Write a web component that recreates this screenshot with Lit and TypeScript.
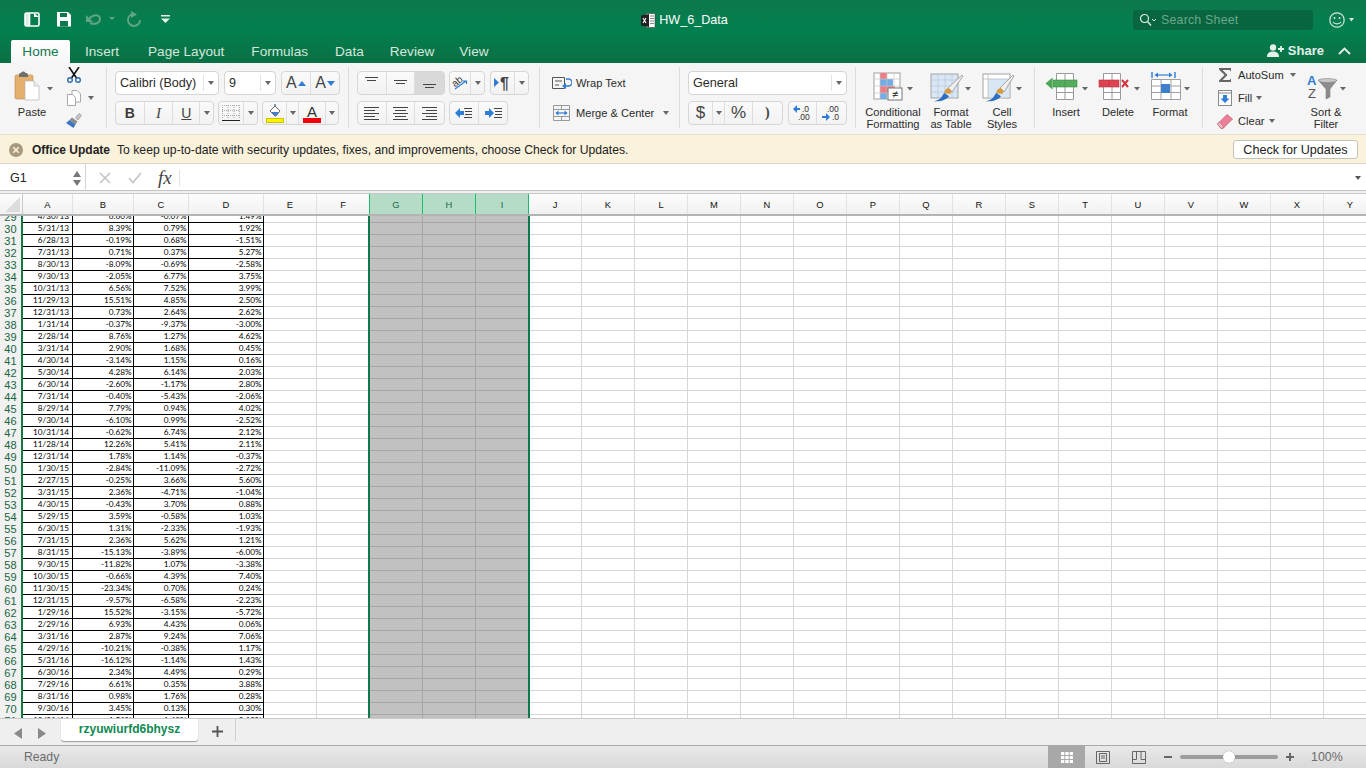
import { LitElement, html, css } from "lit";
import { customElement } from "lit/decorators.js";

// [date, B, C, D] for rows 29-71
const DATA: string[][] = [
  ["4/30/13", "6.60", "-0.07", "1.49"],
  ["5/31/13", "8.39", "0.79", "1.92"],
  ["6/28/13", "-0.19", "0.68", "-1.51"],
  ["7/31/13", "0.71", "0.37", "5.27"],
  ["8/30/13", "-8.09", "-0.69", "-2.58"],
  ["9/30/13", "-2.05", "6.77", "3.75"],
  ["10/31/13", "6.56", "7.52", "3.99"],
  ["11/29/13", "15.51", "4.85", "2.50"],
  ["12/31/13", "0.73", "2.64", "2.62"],
  ["1/31/14", "-0.37", "-9.37", "-3.00"],
  ["2/28/14", "8.76", "1.27", "4.62"],
  ["3/31/14", "2.90", "1.68", "0.45"],
  ["4/30/14", "-3.14", "1.15", "0.16"],
  ["5/30/14", "4.28", "6.14", "2.03"],
  ["6/30/14", "-2.60", "-1.17", "2.80"],
  ["7/31/14", "-0.40", "-5.43", "-2.06"],
  ["8/29/14", "7.79", "0.94", "4.02"],
  ["9/30/14", "-6.10", "0.99", "-2.52"],
  ["10/31/14", "-0.62", "6.74", "2.12"],
  ["11/28/14", "12.26", "5.41", "2.11"],
  ["12/31/14", "1.78", "1.14", "-0.37"],
  ["1/30/15", "-2.84", "-11.09", "-2.72"],
  ["2/27/15", "-0.25", "3.66", "5.60"],
  ["3/31/15", "2.36", "-4.71", "-1.04"],
  ["4/30/15", "-0.43", "3.70", "0.88"],
  ["5/29/15", "3.59", "-0.58", "1.03"],
  ["6/30/15", "1.31", "-2.33", "-1.93"],
  ["7/31/15", "2.36", "5.62", "1.21"],
  ["8/31/15", "-15.13", "-3.89", "-6.00"],
  ["9/30/15", "-11.82", "1.07", "-3.38"],
  ["10/30/15", "-0.66", "4.39", "7.40"],
  ["11/30/15", "-23.34", "0.70", "0.24"],
  ["12/31/15", "-9.57", "-6.58", "-2.23"],
  ["1/29/16", "15.52", "-3.15", "-5.72"],
  ["2/29/16", "6.93", "4.43", "0.06"],
  ["3/31/16", "2.87", "9.24", "7.06"],
  ["4/29/16", "-10.21", "-0.38", "1.17"],
  ["5/31/16", "-16.12", "-1.14", "1.43"],
  ["6/30/16", "2.34", "4.49", "0.29"],
  ["7/29/16", "6.61", "0.35", "3.88"],
  ["8/31/16", "0.98", "1.76", "0.28"],
  ["9/30/16", "3.45", "0.13", "0.30"],
  ["10/31/16", "1.51", "-1.48", "3.19"],
];

const COLS = "ABCDEFGHIJKLMNOPQRSTUVWXY".split("");
const SELECTED = ["G", "H", "I"];

const caret = html`<span class="caret"></span>`;

@customElement("app-root")
export class AppRoot extends LitElement {
  static styles = css`
    :host {
      display: flex;
      flex-direction: column;
      width: 1366px;
      height: 768px;
      overflow: hidden;
      background: #fff;
      font-family: "Liberation Sans", Arial, sans-serif;
      color: #222;
    }
    svg { display: block; flex: none; }

    /* title bar */
    .top {
      height: 63px;
      flex: none;
      background: linear-gradient(#0e784d, #03804f 45%, #0a6f45);
      display: flex;
      flex-direction: column;
    }
    .title-row {
      height: 40px;
      display: grid;
      grid-template-columns: 1fr auto 1fr;
      align-items: center;
    }
    .qat { display: flex; align-items: center; padding-left: 24px; }
    .doc {
      display: flex;
      align-items: center;
      gap: 3px;
      padding-left: 3px;
      color: #fff;
      font-size: 12.6px;
    }
    .tr { display: flex; justify-content: flex-end; align-items: center; padding-right: 11px; }
    .search {
      width: 180px;
      height: 20px;
      box-sizing: border-box;
      background: #07653f;
      border-radius: 3px;
      display: flex;
      align-items: center;
      padding-left: 6px;
      gap: 4px;
      color: #6aa88b;
      font-size: 12.4px;
      letter-spacing: 0.2px;
      margin-right: 16px;
    }
    .tab-row {
      height: 23px;
      display: flex;
      align-items: flex-end;
      padding-left: 11px;
      font-size: 13.6px;
      color: #d3e7dc;
    }
    .tab { height: 23px; line-height: 24px; margin-right: 27px; }
    .tab.home {
      width: 59px;
      text-align: center;
      background: linear-gradient(#fff, #f6f6f6);
      color: #14774b;
      border-radius: 2px 2px 0 0;
      margin-right: 15px;
    }
    .tab.ins { margin-right: 29px; }
    .tab.dat { margin-right: 26px; }
    .tab.rev { margin-right: 25px; }
    .share {
      margin-left: auto;
      display: flex;
      align-items: center;
      height: 23px;
      color: #e4f0ea;
      font-weight: 700;
      font-size: 13px;
      padding: 0 15px 2px 0;
      box-sizing: border-box;
      gap: 3px;
    }
    .share .chev { margin-left: 11px; }

    /* ribbon */
    .ribbon {
      height: 71px;
      flex: none;
      box-sizing: border-box;
      background: #f5f5f5;
      display: flex;
      padding-top: 4px;
      font-size: 11.1px;
      color: #2b2b2b;
    }
    .g {
      height: 61px;
      box-sizing: border-box;
      border-right: 1px solid #dcdcdc;
      display: flex;
      flex: none;
    }
    .g.clip { width: 107px; padding-left: 8px; }
    .g.font { width: 242px; padding: 4px 0 0 8px; flex-direction: column; gap: 6px; }
    .g.align { width: 191px; padding: 4px 0 0 8px; flex-direction: column; gap: 6px; }
    .g.wrap { width: 140px; padding: 4px 0 0 12px; flex-direction: column; gap: 6px; }
    .g.num { width: 176px; padding: 4px 0 0 8px; flex-direction: column; gap: 6px; }
    .g.styles { width: 179px; padding-left: 8px; }
    .g.cells { width: 168px; padding-left: 5px; }
    .g.edit { width: 163px; padding-left: 14px; border-right: 0; }

    .line { display: flex; height: 24px; align-items: stretch; }
    .big { display: flex; flex-direction: column; align-items: center; text-align: center; line-height: 12px; flex: none; }
    .big svg { height: 37px; margin-bottom: 2px; }
    .w48 { width: 48px; }
    .w58 { width: 58px; }
    .w44 { width: 44px; }
    .w52 { width: 52px; }
    .small-col { display: flex; flex-direction: column; gap: 7px; flex: none; }
    .small-col.tools { margin-left: 10px; width: 40px; }
    .small-col.sum { width: 87px; }
    .si { display: flex; align-items: center; height: 16px; gap: 5px; }
    .si .caret { margin-left: -1px; }
    .si .caret.gapc { margin-left: 1px; }
    .tools .si .caret { margin-left: 1px; }

    .caret {
      display: inline-block;
      width: 0;
      height: 0;
      border-left: 3px solid transparent;
      border-right: 3px solid transparent;
      border-top: 4px solid #666;
      flex: none;
    }
    .select {
      background: #fff;
      border: 1px solid #d4d4d4;
      border-radius: 4px;
      box-sizing: border-box;
      display: flex;
      align-items: center;
      font-size: 12.6px;
      padding-left: 4px;
    }
    .select .arrow {
      margin-left: auto;
      height: 16px;
      width: 13px;
      border-left: 1px solid #e2e2e2;
      display: flex;
      align-items: center;
      justify-content: center;
      flex: none;
      margin-right: 1px;
    }
    .s-font { width: 104px; }
    .s-size { width: 52px; margin-left: 5px; }
    .s-gen { width: 159px; }
    .bg {
      display: flex;
      background: linear-gradient(#fafafa, #f2f2f2);
      border: 1px solid #d6d6d6;
      border-radius: 4px;
      box-sizing: border-box;
    }
    .b {
      display: flex;
      align-items: center;
      justify-content: center;
      box-sizing: border-box;
      border-right: 1px solid #dedede;
      color: #444;
      flex: none;
    }
    .b:last-child { border-right: 0; }
    .b.on { background: #d9d9d9; }
    .bg.ml5 { margin-left: 5px; }
    .bg.ml4 { margin-left: 4px; }
    .w29 { width: 28.7px; }
    .w12 { width: 12px; }
    .w13 { width: 13px; }
    .w21 { width: 21px; }
    .w24 { width: 24px; }
    .w25 { width: 25px; }
    .w27 { width: 27px; }
    .w28 { width: 28px; }
    .gp { font-size: 16px; gap: 1px; font-weight: 400; }
    .bold { font-weight: 700; font-size: 14px; color: #3c3c3c; }
    .ital { font-style: italic; font-family: "Liberation Serif", serif; font-size: 15px; }
    .und { text-decoration: underline; font-size: 14px; }
    .sym { font-size: 17px; color: #444; }
    .comma { font-family: "Liberation Serif", serif; font-weight: 700; font-size: 14px; }
    .wl { display: flex; align-items: center; height: 24px; gap: 4px; }
    .wl .caret { margin-left: 5px; }
    svg text { font-family: "Liberation Sans", Arial, sans-serif; }

    /* update bar */
    .update {
      height: 30px;
      flex: none;
      box-sizing: border-box;
      background: #fbf2dc;
      border-top: 1px solid #e6e0cf;
      border-bottom: 1px solid #d8d4c8;
      display: flex;
      align-items: center;
      padding: 1px 0 0 9px;
      font-size: 12.2px;
      color: #222;
    }
    .update b { font-weight: 700; margin: 0 7px 0 9px; font-size: 12px; }
    .update button {
      margin-left: auto;
      margin-right: 8px;
      width: 125px;
      height: 19px;
      padding: 0;
      background: #fff;
      border: 1px solid #c4c2bb;
      border-radius: 3px;
      font: 12.6px "Liberation Sans", Arial, sans-serif;
      color: #222;
    }

    /* formula bar */
    .fx {
      height: 27px;
      flex: none;
      box-sizing: border-box;
      background: #fff;
      border-bottom: 1px solid #c2c2c2;
      display: flex;
      align-items: center;
    }
    .name {
      width: 86px;
      height: 100%;
      box-sizing: border-box;
      border-right: 1px solid #d4d4d4;
      display: flex;
      align-items: center;
      padding: 2px 0 0 10px;
      font-size: 12.6px;
      flex: none;
    }
    .name svg { margin-left: auto; margin-right: 4px; }
    .fx-tools { display: flex; align-items: center; padding: 2px 0 0 13px; flex: 1; height: 100%; box-sizing: border-box; }
    .fx-tools .chk { margin-left: 17px; }
    .fxt {
      font-family: "Liberation Serif", serif;
      font-style: italic;
      font-size: 19px;
      color: #444;
      margin-left: 16px;
      padding-right: 7px;
      border-right: 1px solid #e0e0e0;
      line-height: 16px;
    }
    .fx-tools .caret { margin-left: auto; margin-right: 5px; border-top-color: #555; }
    .fx-gap { height: 3px; flex: none; background: #f0f0f0; border-bottom: 1px solid #c8c8c8; box-sizing: border-box; }

    /* grid */
    .cols, .row { display: grid; grid-template-columns: 23px 50px 61px 55px 75px 53px 53px repeat(19, 53px); }
    .cols {
      height: 22px;
      flex: none;
      box-sizing: border-box;
      border-bottom: 2px solid #b4b4b4;
      background: linear-gradient(#fdfdfd, #f1f1f1);
      font-size: 9.4px;
      color: #111;
    }
    .corner { position: relative; border-right: 1px solid #c8c8c8; }
    .corner::after {
      content: "";
      position: absolute;
      right: 2px;
      bottom: 2px;
      border-left: 15px solid transparent;
      border-bottom: 15px solid #dcdcdc;
    }
    .ch {
      display: flex;
      align-items: center;
      justify-content: center;
      box-sizing: border-box;
      border-right: 1px solid #e2e2e2;
    }
    .ch.sel { background: #b4dcc6; color: #1c6a48; border-right: 1px solid #1ebd6e; }
    .ch.pre { border-right: 1px solid #1ebd6e; }
    .sheet { height: 502px; flex: none; overflow: hidden; position: relative; background: #fff; }
    .rows { margin-top: -5px; }
    .row { height: 12px; font-family: Lato, Carlito, sans-serif; font-size: 8.2px; line-height: 11px; color: #000; }
    .rh {
      background: #f1f1f1;
      border-right: 2px solid #107c41;
      box-sizing: border-box;
      font: 11px/12px "Liberation Sans", Arial, sans-serif;
      color: #17663f;
      text-align: center;
      letter-spacing: 0.2px;
    }
    .c {
      box-sizing: border-box;
      border-right: 1px solid #d6d6d6;
      border-bottom: 1px solid #d6d6d6;
      text-align: right;
      padding-right: 1.5px;
      white-space: nowrap;
      overflow: hidden;
    }
    .c.data { border-color: #000; }
    .c.date { padding-right: 3px; }
    .c.sel { background: #c1c1c1; border-color: #a6a6a6; }
    .selbar { position: absolute; top: 0; bottom: 0; width: 2px; background: #0a7a4a; }
    .selbar.l { left: 368px; }
    .selbar.r { left: 528px; }

    /* sheet tabs */
    .tabs {
      height: 27px;
      flex: none;
      box-sizing: border-box;
      background: #efefef;
      border-top: 1px solid #c9c9c9;
      display: flex;
      padding-left: 14px;
    }
    .nav { display: flex; gap: 16px; align-items: center; width: 47px; padding-top: 2px; }
    .stab {
      width: 137px;
      height: 22px;
      background: #fff;
      border-radius: 0 0 3px 3px;
      box-shadow: 0 1px 1px #9a9a9a;
      color: #0f8a52;
      font-weight: 700;
      font-size: 12px;
      line-height: 21px;
      text-align: center;
    }
    .plus {
      width: 38px;
      height: 22px;
      box-sizing: border-box;
      border-right: 1px solid #cfcfcf;
      display: flex;
      align-items: center;
      justify-content: center;
      padding: 2px 0 0 2px;
    }

    /* status bar */
    .status {
      height: 23px;
      flex: none;
      box-sizing: border-box;
      background: linear-gradient(#e9e9e9, #d9d9d9);
      border-top: 1px solid #a9a9a9;
      display: flex;
      align-items: center;
      padding-left: 24px;
      font-size: 12.2px;
      color: #6c6c6c;
    }
    .views { margin-left: auto; display: flex; align-items: stretch; height: 100%; }
    .view { width: 36px; display: flex; align-items: center; justify-content: center; }
    .view.on { background: #a8a8a8; width: 37px; }
    .view.last { width: 35px; }
    .zoom { display: flex; align-items: center; margin-left: 8px; }
    .track {
      width: 98px;
      height: 4px;
      background: #9c9c9c;
      border-radius: 2px;
      margin: 0 8px;
      position: relative;
    }
    .knob {
      position: absolute;
      left: 43px;
      top: -4px;
      width: 12px;
      height: 12px;
      background: #fff;
      border-radius: 50%;
      box-shadow: 0 0 1px #777;
    }
    .pct {
      width: 72px;
      padding-left: 17px;
      box-sizing: border-box;
      font-size: 12.4px;
      display: flex;
      align-items: center;
    }
  `;

  // quick access toolbar
  private qat() {
    return html`<div class="qat">
      <svg width="150" height="40" viewBox="0 0 150 40">
        <g fill="none" stroke="#fff" stroke-width="1.6">
          <rect x="1" y="13" width="14" height="13" rx="1.5" />
          <path d="M5.5 13v13" />
        </g>
        <path d="M1 13h5v13H1z" fill="#fff" opacity=".85" />
        <path d="M10 13l5 4h-5z" fill="#fff" />
        <path d="M33 12h11l3 3v11.5H33z" fill="#fff" />
        <path d="M36 13h7v4h-7z" fill="#0a7a4d" />
        <path d="M36 21h8v5.5h-8z" fill="#0a7a4d" />
        <g fill="none" stroke="#5fa585" stroke-width="2">
          <path d="M66 23c5 2 10 0 10-4s-5-5-9-2l-3 3" />
          <path d="M110 14c-4 0-6 3-6 6a6 6 0 0 0 12 0" />
        </g>
        <path d="M62 15v7h7z" fill="#5fa585" />
        <path d="M85 17h6l-3 3z" fill="#5fa585" />
        <path d="M107 11v7l6-3.500z" fill="#5fa585" />
        <path d="M137 15h9v1.600h-9zM137 18.500h9l-4.500 4.500z" fill="#e8f2ed" />
      </svg>
    </div>`;
  }

  private excelDoc() {
    return html`<svg width="15" height="15" viewBox="0 0 15 15">
      <path d="M5 .5h9v14H5z" fill="#fff" stroke="#444" stroke-width=".6" />
      <path d="M9 3h4M9 5.500h4M9 8h4M9 10.500h4" stroke="#777" stroke-width=".9" />
      <path d="M0 2.500l8-1.500v13l-8-1.500z" fill="#222" />
      <path d="M2 5l3 5M5 5l-3 5" stroke="#fff" stroke-width="1.100" />
    </svg>`;
  }

  private pasteIcon() {
    return html`<svg width="48" height="37" viewBox="0 0 48 37">
      <rect x="7" y="8" width="18" height="24" rx="1.500" fill="#e4b06e" stroke="#b98a4e" stroke-width=".6" />
      <path d="M11 8c0-2 1.500-2 2-2 .5-2 4-2 4.500 0 .8 0 2.500 0 2.500 2v2h-9z" fill="#6f6f6f" />
      <path d="M17 14h9l5 5v14H17z" fill="#fff" stroke="#b5b5b5" stroke-width=".7" />
      <path d="M26 14v5h5" fill="#eee" stroke="#b5b5b5" stroke-width=".7" />
      <path d="M39 20h6l-3 3.500z" fill="#666" />
    </svg>`;
  }

  private scissors() {
    return html`<svg width="16" height="16" viewBox="0 0 16 16">
      <path d="M3 0l7.500 11M13 0L5.500 11" stroke="#111" stroke-width="1.600" fill="none" />
      <circle cx="4" cy="13" r="2.300" fill="none" stroke="#2b6db0" stroke-width="1.400" />
      <circle cx="12" cy="13" r="2.300" fill="none" stroke="#2b6db0" stroke-width="1.400" />
    </svg>`;
  }

  private copyIcon() {
    return html`<svg width="16" height="16" viewBox="0 0 16 16">
      <path d="M1.500 4.500h5l3 3v8h-8z" fill="#fff" stroke="#a8a8a8" />
      <path d="M6 .5h5l3.500 3.500v8H9.500V7.500l-3-3H6z" fill="#fff" stroke="#a8a8a8" />
    </svg>`;
  }

  private brushIcon() {
    return html`<svg width="16" height="16" viewBox="0 0 16 16">
      <path d="M9.500 5l3.500-4.500 2.500 2L12 7z" fill="#c6c6c6" stroke="#8a8a8a" stroke-width=".6" />
      <path d="M6 4.500l5.500 4-2 3-6-4.500z" fill="#8b8b8b" />
      <path d="M3.500 7l6 4.500-2 3.500L0 10z" fill="#3a78c0" />
    </svg>`;
  }

  private alignV(y: number, on = false) {
    return html`<div class="b w29 ${on ? "on" : ""}">
      <svg width="15" height="14" viewBox="0 0 15 14">
        <path d="M1 ${y}.5h13M3 ${y + 3}.5h9" stroke="#444" stroke-width="1" />
      </svg>
    </div>`;
  }

  private alignH(kind: string) {
    const second =
      kind === "l"
        ? "M0 3.500h11M0 9.500h11"
        : kind === "c"
        ? "M2 3.500h11M2 9.500h11"
        : "M4 3.500h11M4 9.500h11";
    return html`<div class="b w29">
      <svg width="15" height="13" viewBox="0 0 15 13">
        <path d="M0 .5h15M0 6.500h15M0 12.500h15 ${second}" stroke="#444" stroke-width="1" />
      </svg>
    </div>`;
  }

  private indent(right: boolean) {
    const arrow = right ? "M0 4h4V1l5 5-5 5V8H0z" : "M9 4H5V1L0 6l5 5V8h4z";
    return html`<div class="b w29">
      <svg width="17" height="12" viewBox="0 0 17 12">
        <path d=${arrow} fill="#2f7dd6" />
        <path d="M9 1.500h8M10 4.500h7M10 7.500h7M9 10.500h8" stroke="#444" stroke-width="1" />
      </svg>
    </div>`;
  }

  private ribbon() {
    return html`<div class="ribbon">
      <div class="g clip">
        <div class="big w48">${this.pasteIcon()}<span>Paste</span></div>
        <div class="small-col tools">
          <div class="si">${this.scissors()}</div>
          <div class="si">${this.copyIcon()}${caret}</div>
          <div class="si">${this.brushIcon()}</div>
        </div>
      </div>

      <div class="g font">
        <div class="line">
          <div class="select s-font">Calibri (Body)<span class="arrow">${caret}</span></div>
          <div class="select s-size">9<span class="arrow">${caret}</span></div>
          <div class="bg ml5">
            <div class="b w29 gp">A<svg width="8" height="5"><path d="M0 5h8L4 0z" fill="#2f7dd6" /></svg></div>
            <div class="b w29 gp">A<svg width="8" height="5"><path d="M0 0h8L4 5z" fill="#2f7dd6" /></svg></div>
          </div>
        </div>
        <div class="line">
          <div class="bg">
            <div class="b w29 bold">B</div>
            <div class="b w29 ital">I</div>
            <div class="b w27 und">U</div>
            <div class="b w13">${caret}</div>
          </div>
          <div class="bg ml4">
            <div class="b w25">
              <svg width="18" height="18" viewBox="0 0 18 18">
                <path d="M.5 1v14M6 1v14M12 1v14M17.500 1v14M0 1.500h18M0 6.500h18M0 11.500h18" stroke="#aaa" stroke-width="1" stroke-dasharray="1 1" />
                <path d="M0 16.500h18" stroke="#222" stroke-width="1" />
              </svg>
            </div>
            <div class="b w13">${caret}</div>
          </div>
          <div class="bg ml4">
            <div class="b w24">
              <svg width="20" height="20" viewBox="0 0 20 20">
                <path d="M5 8l5-5 5 5-4 5-1 0z" fill="#fff" stroke="#555" stroke-width=".9" />
                <path d="M6 9h8l-3.500 4z" fill="#3a7fce" />
                <path d="M10 3V1" stroke="#3a7fce" stroke-width="1.500" />
                <rect x="1.500" y="15.500" width="17" height="4" fill="#fff200" stroke="#c9c400" />
              </svg>
            </div>
            <div class="b w12">${caret}</div>
            <div class="b w27">
              <svg width="20" height="20" viewBox="0 0 20 20">
                <text x="10" y="14" font-size="15" text-anchor="middle" fill="#333">A</text>
                <rect x="1" y="15" width="18" height="5" fill="#f0000a" />
              </svg>
            </div>
            <div class="b w12">${caret}</div>
          </div>
        </div>
      </div>

      <div class="g align">
        <div class="line">
          <div class="bg">${this.alignV(1)}${this.alignV(4)}${this.alignV(8, true)}</div>
          <div class="bg ml4">
            <div class="b w21">
              <svg width="20" height="18" viewBox="0 0 20 18">
                <text x="2" y="11" font-size="10" fill="#333" transform="rotate(-40 7 8)">ab</text>
                <path d="M5 15l11-8M13 7h3.500v3" fill="none" stroke="#2f7dd6" stroke-width="1.200" />
              </svg>
            </div>
            <div class="b w13">${caret}</div>
          </div>
          <div class="bg ml5">
            <div class="b w24">
              <svg width="20" height="18" viewBox="0 0 20 18">
                <path d="M1 4l5 4.500L1 13z" fill="#2f7dd6" />
                <text x="7" y="15" font-size="16" font-weight="700" fill="#444">¶</text>
              </svg>
            </div>
            <div class="b w13">${caret}</div>
          </div>
        </div>
        <div class="line">
          <div class="bg">${this.alignH("l")}${this.alignH("c")}${this.alignH("r")}</div>
          <div class="bg ml4">${this.indent(false)}${this.indent(true)}</div>
        </div>
      </div>

      <div class="g wrap">
        <div class="wl">
          <svg width="20" height="14" viewBox="0 0 20 14">
            <path d="M.5 1.500h12v11H.5zM3 5h7M3 9h4" fill="none" stroke="#555" />
            <path d="M14 3h2.500a3 3 0 0 1 0 7H12" fill="none" stroke="#2f7dd6" stroke-width="1.400" />
            <path d="M14 7l-4 3 4 3z" fill="#2f7dd6" />
          </svg>
          <span>Wrap Text</span>
        </div>
        <div class="wl">
          <svg width="20" height="17" viewBox="0 0 20 17">
            <path d="M1.500 .5h16v15h-16zM1.500 4.500h16M1.500 11.500h16M9.500 .5v4M9.500 11.500v4" fill="none" stroke="#9a9a9a" />
            <path d="M4 8h11" stroke="#2f7dd6" stroke-width="1.200" />
            <path d="M6.500 5.500L3.500 8l3 2.500zM12.500 5.500l3 2.500-3 2.500z" fill="#2f7dd6" />
          </svg>
          <span>Merge &amp; Center</span>${caret}
        </div>
      </div>

      <div class="g num">
        <div class="line">
          <div class="select s-gen">General<span class="arrow">${caret}</span></div>
        </div>
        <div class="line">
          <div class="bg">
            <div class="b w24 sym">$</div>
            <div class="b w12">${caret}</div>
            <div class="b w28 sym">%</div>
            <div class="b w29 comma">)</div>
          </div>
          <div class="bg ml5">
            <div class="b w29">
              <svg width="22" height="18" viewBox="0 0 22 18">
                <path d="M7 3H4V0L0 4l4 4V5h3z" fill="#2f7dd6" transform="translate(1 1)" />
                <text x="10" y="7.500" font-size="8.500" fill="#333">.0</text>
                <text x="6" y="16" font-size="8.500" fill="#333">.00</text>
              </svg>
            </div>
            <div class="b w29">
              <svg width="22" height="18" viewBox="0 0 22 18">
                <text x="6" y="7.500" font-size="8.500" fill="#333">.00</text>
                <path d="M0 12h4V9l4 4-4 4v-3H0z" fill="#2f7dd6" transform="translate(1 0)" />
                <text x="11" y="16" font-size="8.500" fill="#333">.0</text>
              </svg>
            </div>
          </div>
        </div>
      </div>

      <div class="g styles">
        <div class="big w58">
          <svg width="58" height="37" viewBox="0 0 58 37">
            <g>
              <rect x="10" y="6" width="26" height="26" fill="#fff" stroke="#a0a0a0" />
              <rect x="16" y="6" width="7" height="6" fill="#ee7d87" />
              <rect x="16" y="12" width="13" height="7" fill="#74ade6" />
              <rect x="16" y="19" width="15" height="7" fill="#ee7d87" />
              <rect x="16" y="26" width="7" height="6" fill="#74ade6" />
              <path d="M10 12h26M10 19h26M10 26h26M16 6v26M23 6v26M30 6v26" stroke="#c6c6c6" stroke-width=".7" fill="none" />
              <rect x="24" y="21" width="14" height="12" fill="#fff" stroke="#777" />
              <text x="31" y="31" font-size="11" text-anchor="middle" fill="#222">≠</text>
            </g>
            <path d="M43 20h6l-3 3.500z" fill="#666" />
          </svg>
          <span>Conditional<br />Formatting</span>
        </div>
        <div class="big w58">
          <svg width="58" height="37" viewBox="0 0 58 37">
            <rect x="9" y="7" width="27" height="24" fill="#d8e6f5" stroke="#a3a3a3" />
            <path d="M9 13h27M9 19h27M9 25h27M16 7v24M23 7v24M30 7v24" stroke="#b9c8d8" stroke-width=".7" />
            <path d="M26 21L40 8l1 1-11 16z" fill="#efefef" stroke="#8a8a8a" stroke-width=".7" />
            <path d="M22 26c1-4 4-6 6-4 2 1 2 3 0 5z" fill="#d99a3e" />
            <path d="M11 34c5 0 8-2 11-8 3 1 4 3 5 3-2 4-9 6-16 5z" fill="#2c6fc4" />
            <path d="M43 20h6l-3 3.500z" fill="#666" />
          </svg>
          <span>Format<br />as Table</span>
        </div>
        <div class="big w44">
          <svg width="44" height="37" viewBox="0 0 44 37">
            <rect x="3" y="7" width="27" height="24" fill="#fff" stroke="#a3a3a3" />
            <rect x="8" y="12" width="21" height="18" fill="#d8e6f5" />
            <path d="M3 12h27M8 7v24" stroke="#b5b5b5" stroke-width=".7" />
            <path d="M20 21L33 8l1 1-10 16z" fill="#efefef" stroke="#8a8a8a" stroke-width=".7" />
            <path d="M16 26c1-4 4-6 6-4 2 1 2 3 0 5z" fill="#d99a3e" />
            <path d="M5 34c5 0 8-2 11-8 3 1 4 3 5 3-2 4-9 6-16 5z" fill="#2c6fc4" />
            <path d="M36 20h6l-3 3.500z" fill="#666" />
          </svg>
          <span>Cell<br />Styles</span>
        </div>
      </div>

      <div class="g cells">
        <div class="big w52">
          <svg width="52" height="37" viewBox="0 0 52 37">
            <path d="M16.500 6.500h17v26h-17zM16.500 25.500h17M25 6.500v26" fill="#fff" stroke="#9a9a9a" />
            <rect x="13" y="13" width="24" height="7" fill="#54ac5c" stroke="#3f8f48" stroke-width=".6" />
            <path d="M25 13v7" stroke="#3f8f48" stroke-width=".7" />
            <path d="M5.500 16.500l7-6v12z" fill="#4ea656" />
            <path d="M42 20h6l-3 3.500z" fill="#666" />
          </svg>
          <span>Insert</span>
        </div>
        <div class="big w52">
          <svg width="52" height="37" viewBox="0 0 52 37">
            <path d="M11.500 6.500h17v26h-17zM11.500 25.500h17M20 6.500v26" fill="#fff" stroke="#9a9a9a" />
            <rect x="7" y="13" width="20" height="7" fill="#dd4452" stroke="#b8333f" stroke-width=".6" />
            <path d="M17 13v7" stroke="#b8333f" stroke-width=".7" />
            <path d="M30 13l6 7M36 13l-6 7" stroke="#d8303e" stroke-width="2" />
            <path d="M42 20h6l-3 3.500z" fill="#666" />
          </svg>
          <span>Delete</span>
        </div>
        <div class="big w52">
          <svg width="52" height="37" viewBox="0 0 52 37">
            <path d="M7.500 12.500h29v20h-29zM7.500 19h29M7.500 25.500h29M17 12.500v20M27 12.500v20" fill="#fff" stroke="#a0a0a0" />
            <rect x="17" y="17" width="9" height="9" fill="#3f80cd" />
            <path d="M8 5v6M31 5v6" stroke="#2f7dd6" stroke-width="1.400" />
            <path d="M12 8h15" stroke="#2f7dd6" stroke-width="1.200" />
            <path d="M14 5.500L10.500 8l3.500 2.500zM25 5.500l3.500 2.500-3.500 2.500z" fill="#2f7dd6" />
            <path d="M40 20h6l-3 3.500z" fill="#666" />
          </svg>
          <span>Format</span>
        </div>
      </div>

      <div class="g edit">
        <div class="small-col sum">
          <div class="si">
            <svg width="16" height="16" viewBox="0 0 16 16">
              <path d="M2 1h12v3.500L12.500 3H5.500l5 5-5 5h7l1.500-1.500V15H2v-1.500L7.500 8 2 2.500z" fill="#666" />
            </svg>
            <span>AutoSum</span><span class="caret gapc"></span>
          </div>
          <div class="si">
            <svg width="16" height="16" viewBox="0 0 16 16">
              <rect x="1.500" y=".5" width="13" height="15" fill="#fff" stroke="#8a8a8a" />
              <path d="M1.500 3h13" stroke="#8a8a8a" />
              <path d="M6 5h4v3.500h2.500L8 13 3.500 8.500H6z" fill="#2f7dd6" />
            </svg>
            <span>Fill</span>${caret}
          </div>
          <div class="si">
            <svg width="16" height="16" viewBox="0 0 16 16">
              <path d="M.5 11L10 1.500 15.500 6 6 15.500H4z" fill="#ee7f96" stroke="#b85c70" stroke-width=".7" />
              <path d="M.5 11l4 4.500 2-2L2.500 9z" fill="#f6c5d0" stroke="#b85c70" stroke-width=".7" />
            </svg>
            <span>Clear</span>${caret}
          </div>
        </div>
        <div class="big w44">
          <svg width="44" height="37" viewBox="0 0 44 37">
            <text x="3" y="18" font-size="13" font-weight="700" fill="#2f7dd6">A</text>
            <text x="4" y="31" font-size="13" font-weight="400" fill="#555">Z</text>
            <path d="M14 13h19l-7 9v8l-4 2V22z" fill="#8c8c8c" stroke="#707070" stroke-width=".5" />
            <ellipse cx="23.500" cy="13.500" rx="9" ry="2" fill="#c8c8c8" stroke="#777" stroke-width=".5" />
            <path d="M36 20h6l-3 3.500z" fill="#666" />
          </svg>
          <span>Sort &amp;<br />Filter</span>
        </div>
      </div>
    </div>`;
  }

  private grid() {
    return html`<div class="sheet">
      <div class="rows">
        ${DATA.map(
          (d, i) => html`<div class="row">
            <div class="rh">${i + 29}</div>
            ${COLS.map((col, j) => {
              const isData = j < 4;
              const cls = [
                "c",
                isData ? "data" : "",
                j === 0 ? "date" : "",
                SELECTED.includes(col) ? "sel" : "",
              ].join(" ");
              const text = isData ? (j === 0 ? d[0] : d[j] + "%") : "";
              return html`<div class=${cls}>${text}</div>`;
            })}
          </div>`
        )}
      </div>
      <div class="selbar l"></div>
      <div class="selbar r"></div>
    </div>`;
  }

  render() {
    return html`
      <div class="top">
        <div class="title-row">
          ${this.qat()}
          <div class="doc">${this.excelDoc()}HW_6_Data</div>
          <div class="tr">
            <div class="search">
              <svg width="18" height="14" viewBox="0 0 18 14">
                <circle cx="5.500" cy="5.500" r="4" fill="none" stroke="#e6f0eb" stroke-width="1.200" />
                <path d="M8.500 8.500L12 12.500" stroke="#e6f0eb" stroke-width="1.300" />
                <path d="M13 6l2 2 2-2" fill="none" stroke="#e6f0eb" stroke-width="1" />
              </svg>
              <span>Search Sheet</span>
            </div>
            <svg width="26" height="16" viewBox="0 0 26 16">
              <circle cx="8" cy="8" r="7.200" fill="none" stroke="#d7e8df" stroke-width="1.200" />
              <circle cx="5.500" cy="6" r="1" fill="#d7e8df" />
              <circle cx="10.500" cy="6" r="1" fill="#d7e8df" />
              <path d="M4 10c1.500 2.500 6.500 2.500 8 0" fill="none" stroke="#d7e8df" stroke-width="1.100" />
              <path d="M20 6h5l-2.500 3.500z" fill="#d7e8df" />
            </svg>
          </div>
        </div>
        <div class="tab-row">
          <div class="tab home">Home</div>
          <div class="tab ins">Insert</div>
          <div class="tab">Page Layout</div>
          <div class="tab">Formulas</div>
          <div class="tab dat">Data</div>
          <div class="tab rev">Review</div>
          <div class="tab">View</div>
          <div class="share">
            <svg width="18" height="13" viewBox="0 0 18 13">
              <circle cx="6" cy="3.500" r="3.200" fill="#e4f0ea" />
              <path d="M0 13c0-4 2.500-5.500 6-5.500s6 1.500 6 5.500z" fill="#e4f0ea" />
              <path d="M11 5h6M14 2v6" stroke="#e4f0ea" stroke-width="1.800" />
            </svg>
            <span>Share</span>
            <svg class="chev" width="13" height="8" viewBox="0 0 13 8">
              <path d="M1 7l5.500-5.500L12 7" fill="none" stroke="#e4f0ea" stroke-width="1.800" />
            </svg>
          </div>
        </div>
      </div>

      ${this.ribbon()}

      <div class="update">
        <svg width="14" height="14" viewBox="0 0 14 14">
          <circle cx="7" cy="7" r="7" fill="#a8997f" />
          <path d="M4.300 4.300l5.400 5.400M9.700 4.300l-5.400 5.400" stroke="#fbf2dc" stroke-width="1.600" />
        </svg>
        <b>Office Update</b>
        <span>To keep up-to-date with security updates, fixes, and improvements, choose Check for Updates.</span>
        <button>Check for Updates</button>
      </div>

      <div class="fx">
        <div class="name">
          G1
          <svg width="8" height="17" viewBox="0 0 8 17">
            <path d="M0 7l4-6 4 6zM0 10l4 6 4-6z" fill="#777" />
          </svg>
        </div>
        <div class="fx-tools">
          <svg width="12" height="12" viewBox="0 0 12 12">
            <path d="M1 1l10 10M11 1L1 11" stroke="#c4c4c4" stroke-width="1.600" />
          </svg>
          <svg class="chk" width="14" height="12" viewBox="0 0 14 12">
            <path d="M1 6l4 4.500L13 1" fill="none" stroke="#c4c4c4" stroke-width="1.600" />
          </svg>
          <span class="fxt">fx</span>
          ${caret}
        </div>
      </div>
      <div class="fx-gap"></div>

      <div class="cols">
        <div class="corner"></div>
        ${COLS.map(
          (c) =>
            html`<div class="ch ${SELECTED.includes(c) ? "sel" : ""} ${c === "F" ? "pre" : ""}">${c}</div>`
        )}
      </div>
      ${this.grid()}

      <div class="tabs">
        <div class="nav">
          <svg width="8" height="11" viewBox="0 0 8 11"><path d="M8 0v11L0 5.500z" fill="#8a8a8a" /></svg>
          <svg width="8" height="11" viewBox="0 0 8 11"><path d="M0 0v11l8-5.500z" fill="#8a8a8a" /></svg>
        </div>
        <div class="stab">rzyuwiurfd6bhysz</div>
        <div class="plus">
          <svg width="11" height="11" viewBox="0 0 11 11"><path d="M5.500 0v11M0 5.500h11" stroke="#555" stroke-width="1.800" /></svg>
        </div>
      </div>

      <div class="status">
        <span>Ready</span>
        <div class="views">
          <div class="view on">
            <svg width="14" height="13" viewBox="0 0 14 13">
              <path d="M.5.5h13v12H.5zM.5 4.500h13M.5 8.500h13M4.800.5v12M9.200.5v12" fill="#fff" stroke="#a8a8a8" stroke-width="1" />
            </svg>
          </div>
          <div class="view">
            <svg width="14" height="13" viewBox="0 0 14 13">
              <path d="M.5.5h13v12H.5z" fill="none" stroke="#666" />
              <path d="M3.500 2.500h7v8h-7zM5 5h4M5 7h4" fill="none" stroke="#666" />
            </svg>
          </div>
          <div class="view last">
            <svg width="14" height="13" viewBox="0 0 14 13">
              <path d="M.5 8.500h4V.5M9 .5v8h4.500M.5.5h13v12H.5z" fill="none" stroke="#666" />
            </svg>
          </div>
          <div class="zoom">
            <svg width="8" height="2"><rect width="8" height="2" fill="#666" /></svg>
            <div class="track"><div class="knob"></div></div>
            <svg width="8" height="8" viewBox="0 0 8 8"><path d="M4 0v8M0 4h8" stroke="#666" stroke-width="2" /></svg>
          </div>
          <div class="pct">100%</div>
        </div>
      </div>
    `;
  }
}
